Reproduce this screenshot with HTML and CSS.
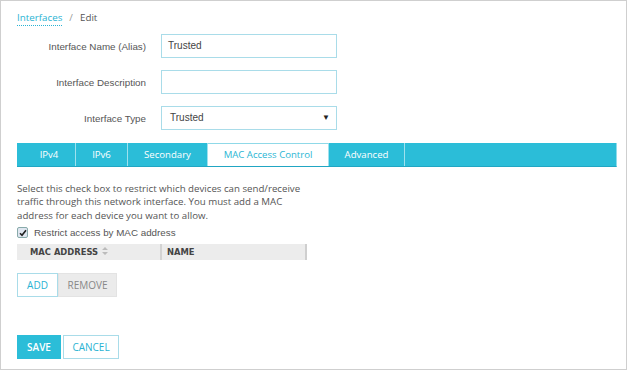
FILE: index.html
```html
<!DOCTYPE html>
<html>
<head>
<meta charset="utf-8">
<link rel="stylesheet" href="styles.css">
</head>
<body>
<div class="frame">
  <div class="crumbs"><a class="crumb-link">Interfaces</a><span class="sep">/</span><span class="crumb-cur">Edit</span></div>
  <div class="form">
    <div class="row">
      <label class="lbl">Interface Name (Alias)</label>
      <div class="field">Trusted</div>
    </div>
    <div class="row">
      <label class="lbl">Interface Description</label>
      <div class="field"></div>
    </div>
    <div class="row">
      <label class="lbl">Interface Type</label>
      <div class="field select"><span>Trusted</span><span class="caret">&#9660;</span></div>
    </div>
  </div>
  <div class="tabs">
    <div class="tab t1">IPv4</div>
    <div class="tab t2">IPv6</div>
    <div class="tab t3">Secondary</div>
    <div class="tab t4 active">MAC Access Control</div>
    <div class="tab t5">Advanced</div>
  </div>
  <p class="desc">Select this check box to restrict which devices can send/receive traffic through this network interface. You must add a MAC address for each device you want to allow.</p>
  <div class="check"><span class="box"><svg width="8" height="8" viewBox="0 0 8 8"><path d="M1 4.2 L3 6.3 L7 1.2" fill="none" stroke="#222" stroke-width="1.6"/></svg></span><span>Restrict access by MAC address</span></div>
  <div class="table">
    <div class="th c1">MAC ADDRESS <span class="sort"><svg width="6" height="8" viewBox="0 0 6 8"><path d="M3 0 L6 3 L0 3Z M0 5 L6 5 L3 8Z" fill="#bbb"/></svg></span></div>
    <div class="th c2">NAME</div>
  </div>
  <div class="btns">
    <div class="btn outline">ADD</div>
    <div class="btn gray">REMOVE</div>
  </div>
  <div class="actions">
    <div class="btn fill">SAVE</div>
    <div class="btn outline cancel">CANCEL</div>
  </div>
</div>
</body>
</html>
```
FILE: styles.css
```css
html, body { margin: 0; padding: 0; background: #fff; }
body { font-family: "Liberation Sans", Arial, sans-serif; }
.frame {
  box-sizing: border-box;
  width: 627px;
  height: 370px;
  border: 1px solid #cfcfcf;
  padding: 9px 9px 0 16px;
}
.crumbs { font-family: "Open Sans", sans-serif; font-size: 9.8px; color: #555; height: 16px; line-height: 16px; }
.crumb-link { color: #29b3d3; border-bottom: 1px dotted #29b3d3; padding-bottom: 1px; }
.sep { color: #999; margin: 0 7px 0 7px; }
.form { margin-top: 8px; display: flex; flex-direction: column; gap: 12px; }
.row { display: flex; align-items: center; }
.lbl { width: 129px; text-align: right; font-size: 9.8px; color: #555; margin-right: 15px; }
.field {
  box-sizing: border-box; width: 176px; height: 24px;
  border: 1px solid #a9dce9; font-size: 10px; color: #444;
  padding: 0 6px; line-height: 22px;
}
.select { display: flex; justify-content: space-between; padding-left: 8px; }
.caret { font-size: 8px; color: #222; }
.tabs {
  margin-top: 13px; width: 600px; height: 24px; box-sizing: border-box;
  background: #2bbdd8; border-bottom: 1px solid #21a6c3; border-right: 1px solid #8fdcea;
  display: flex; font-family: "Open Sans", sans-serif; font-size: 9.6px; color: #fff;
}
.tab { box-sizing: border-box; text-align: center; line-height: 23px; border-right: 1px solid #9fe1ee; }
.t1 { width: 59px; padding-left: 6px; }
.t2 { width: 52px; }
.t3 { width: 80px; }
.t4 { width: 121px; }
.t5 { width: 76px; }
.tab.active { background: #fff; color: #2bb6d4; border-top: 1px solid #8fd9e8; line-height: 22px; }
.desc {
  margin: 15px 0 0; width: 290px; font-family: "Open Sans", sans-serif;
  font-size: 9.7px; line-height: 13.3px; color: #555;
}
.check { display: flex; align-items: center; margin-top: 4px; font-size: 9.8px; color: #555; height: 14px; }
.box {
  box-sizing: border-box; width: 11px; height: 11px; border: 1px solid #8aa; border-radius: 2px;
  background: #dfe6f0; display: flex; align-items: center; justify-content: center; margin-right: 6px;
}
.table { display: flex; margin-top: 4px; width: 288px; height: 16px; background: #ececec; border-right: 2px solid #cfcfcf; }
.th { font-family: "DejaVu Sans", sans-serif; font-weight: 700; font-size: 8.4px; color: #444; line-height: 16px; }
.c1 { width: 130px; padding-left: 13px; border-right: 2px solid #d3d3d3; }
.c2 { padding-left: 5px; }
.sort { display: inline-block; margin-left: 1px; }
.btns { display: flex; margin-top: 13px; }
.btn {
  box-sizing: border-box; height: 24px; line-height: 22px; font-family: "Open Sans", sans-serif;
  font-size: 10px; text-align: center;
}
.outline { border: 1px solid #a9dce9; color: #29b3d3; background: #fff; width: 41px; }
.gray { background: #ebebeb; color: #888; width: 59px; border: 1px solid #e3e3e3; }
.actions { display: flex; gap: 2px; margin-top: 38px; }
.fill { background: #2bbdd8; color: #fff; width: 44px; border: 1px solid #2bbdd8; font-weight: 600; }
.cancel { width: 56px; }
```
